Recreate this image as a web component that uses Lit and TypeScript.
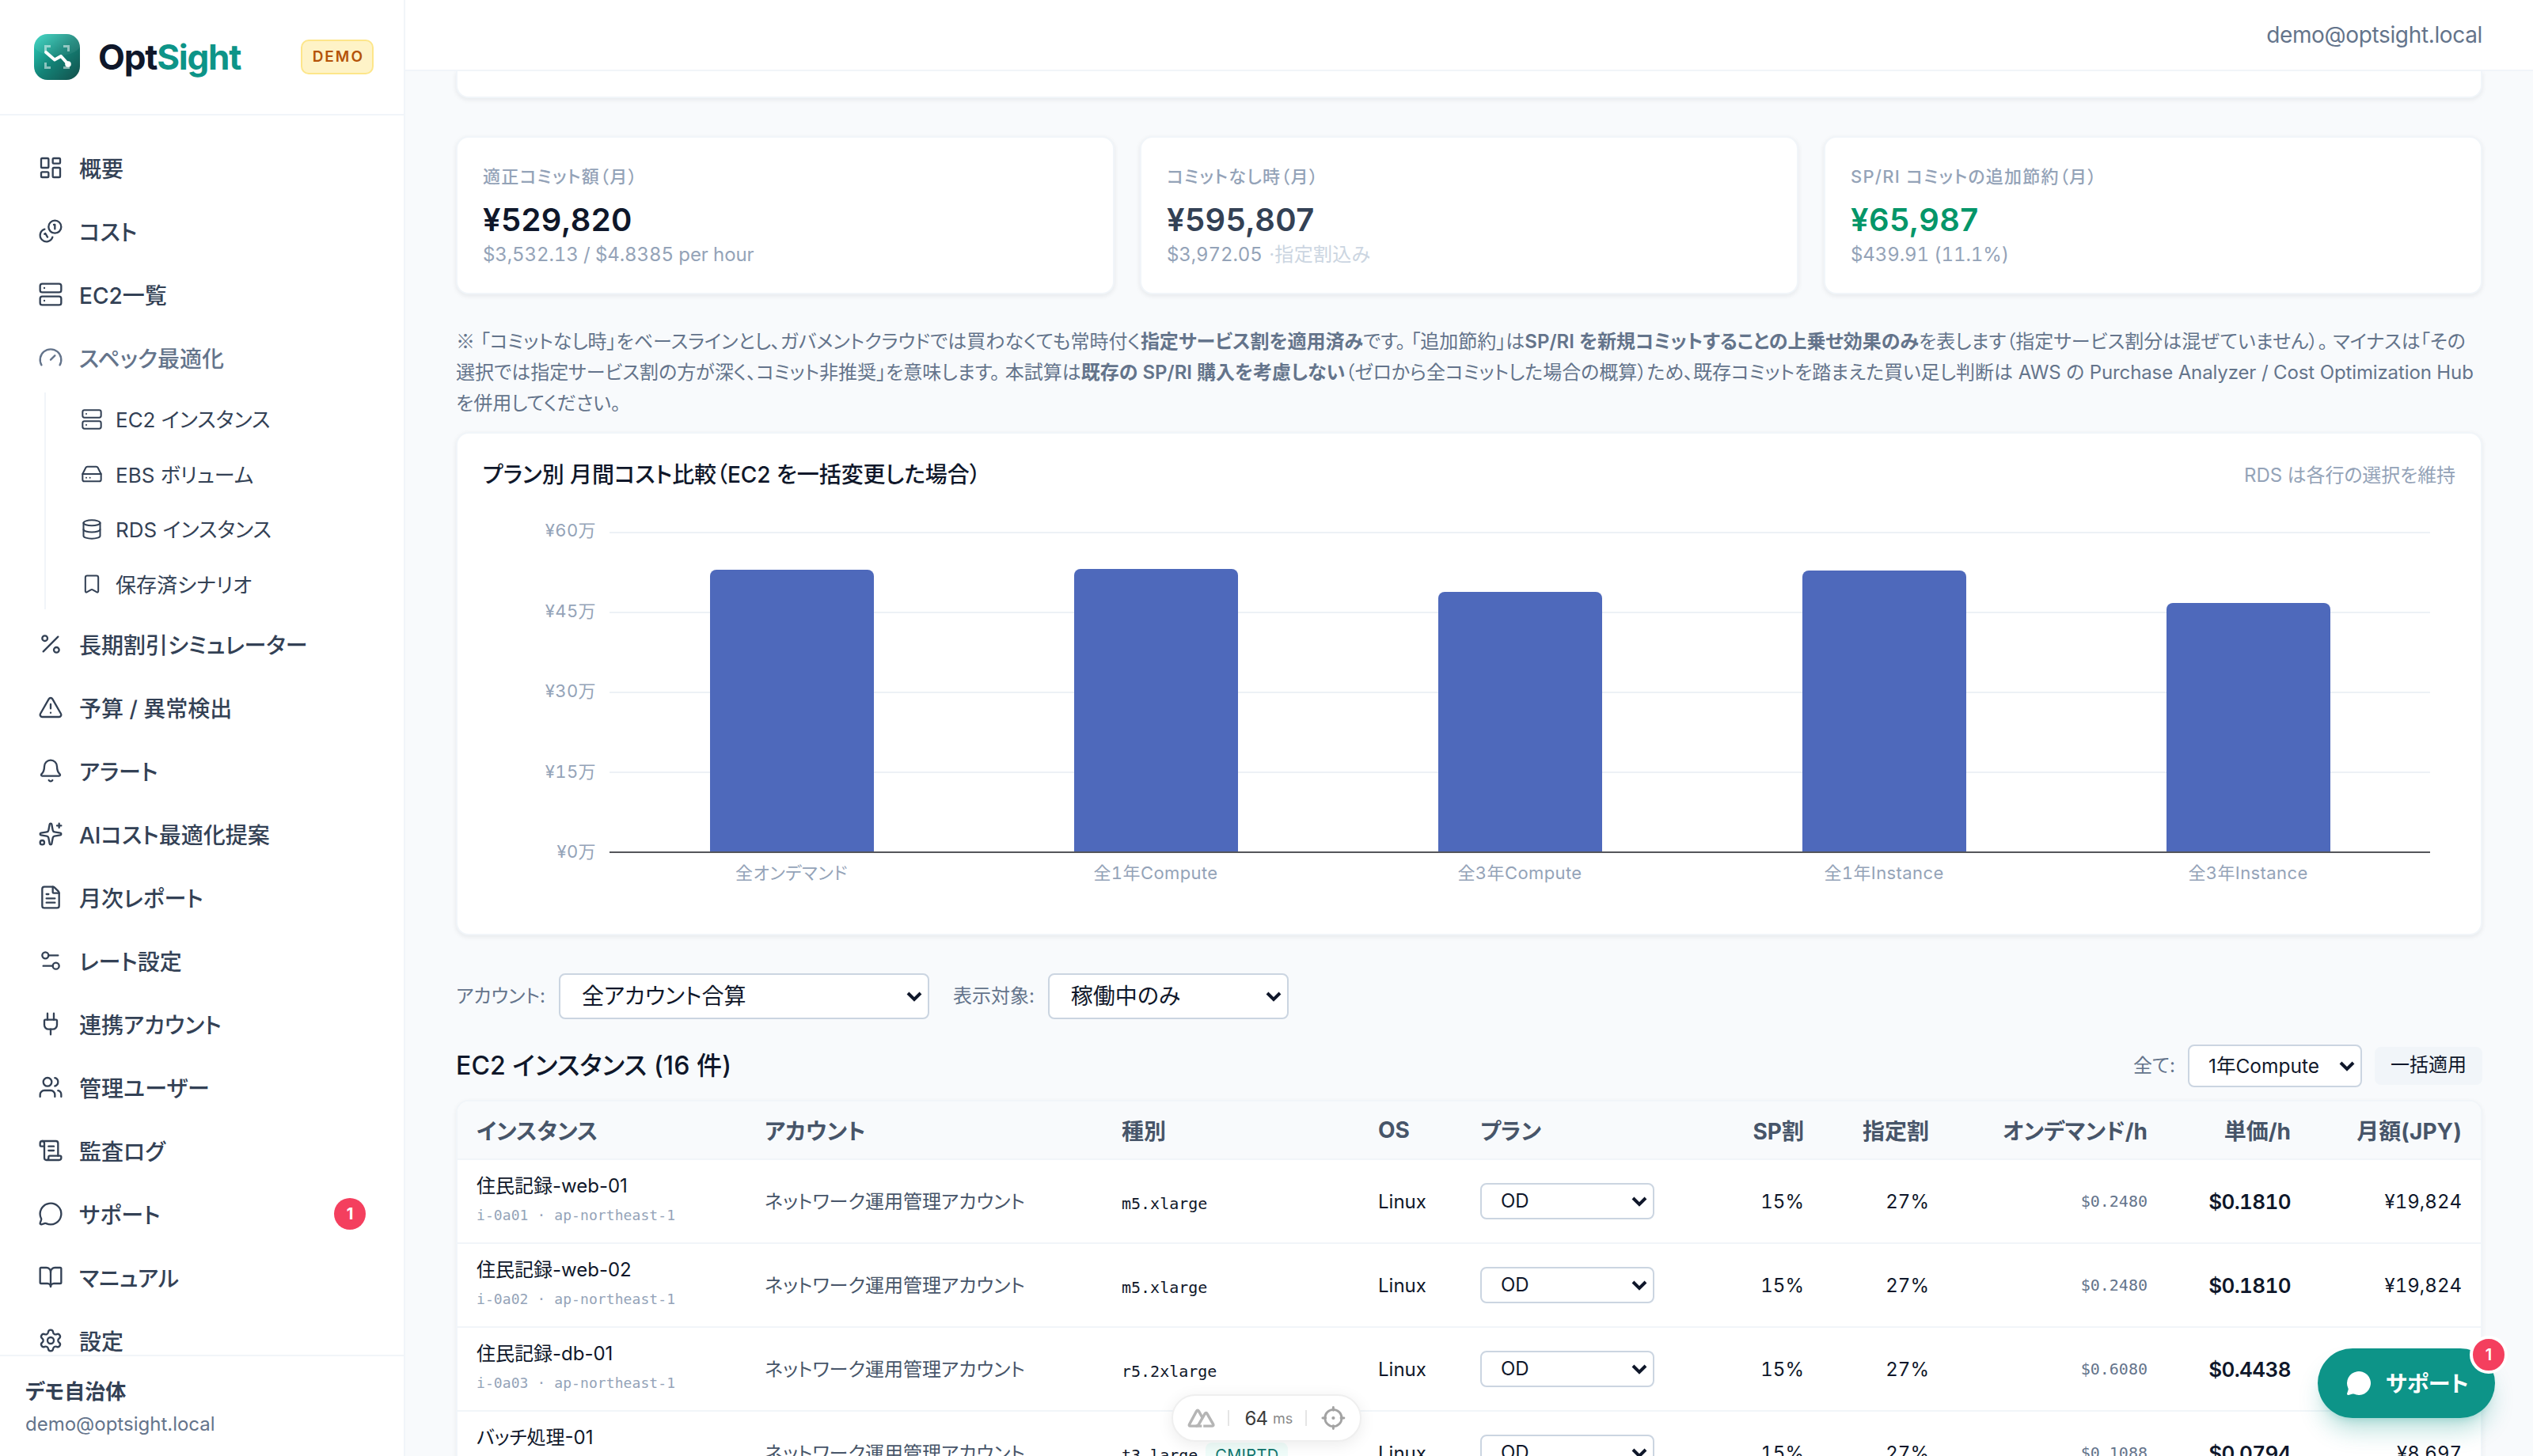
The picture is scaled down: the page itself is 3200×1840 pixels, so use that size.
import {LitElement, html, svg, css, nothing} from 'lit';
import type {SVGTemplateResult} from 'lit';
import {customElement, property} from 'lit/decorators.js';
import {classMap} from 'lit/directives/class-map.js';

interface NavItem {
  icon: string;
  label: string;
  badge?: number;
  children?: NavItem[];
}

interface InstanceRow {
  name: string;
  id: string;
  account: string;
  type: string;
  tag?: string;
  onDemand: string;
  unit: string;
  monthly: string;
}

const ICONS: Record<string, SVGTemplateResult> = {
  dashboard: svg`<rect width="7" height="9" x="3" y="3" rx="1"/><rect width="7" height="5" x="14" y="3" rx="1"/><rect width="7" height="9" x="14" y="12" rx="1"/><rect width="7" height="5" x="3" y="16" rx="1"/>`,
  coins: svg`<path d="M13.744 17.736a6 6 0 1 1-7.48-7.48"/><path d="M15 6h1v4"/><path d="m6.134 14.768.866-.5 2 3.464"/><circle cx="16" cy="8" r="6"/>`,
  server: svg`<rect width="20" height="8" x="2" y="2" rx="2"/><rect width="20" height="8" x="2" y="14" rx="2"/><path d="M6 6h.01M6 18h.01"/>`,
  gauge: svg`<path d="m12 14 4-4"/><path d="M3.34 19a10 10 0 1 1 17.32 0"/>`,
  drive: svg`<path d="M22 12H2"/><path d="M5.45 5.11 2 12v6a2 2 0 0 0 2 2h16a2 2 0 0 0 2-2v-6l-3.45-6.89A2 2 0 0 0 16.76 4H7.24a2 2 0 0 0-1.79 1.11z"/><path d="M6 16h.01M10 16h.01"/>`,
  database: svg`<ellipse cx="12" cy="5" rx="9" ry="3"/><path d="M3 5v14a9 3 0 0 0 18 0V5"/><path d="M3 12a9 3 0 0 0 18 0"/>`,
  bookmark: svg`<path d="M17 3a2 2 0 0 1 2 2v15a1 1 0 0 1-1.496.868l-4.512-2.578a2 2 0 0 0-1.984 0l-4.512 2.578A1 1 0 0 1 5 20V5a2 2 0 0 1 2-2z"/>`,
  percent: svg`<path d="M19 5 5 19"/><circle cx="6.5" cy="6.5" r="2.5"/><circle cx="17.5" cy="17.5" r="2.5"/>`,
  warning: svg`<path d="m21.73 18-8-14a2 2 0 0 0-3.48 0l-8 14A2 2 0 0 0 4 21h16a2 2 0 0 0 1.73-3"/><path d="M12 9v4M12 17h.01"/>`,
  bell: svg`<path d="M10.268 21a2 2 0 0 0 3.464 0"/><path d="M3.262 15.326A1 1 0 0 0 4 17h16a1 1 0 0 0 .74-1.673C19.41 13.956 18 12.499 18 8A6 6 0 0 0 6 8c0 4.499-1.411 5.956-2.738 7.326"/>`,
  sparkles: svg`<path d="M11.017 2.814a1 1 0 0 1 1.966 0l1.051 5.558a2 2 0 0 0 1.594 1.594l5.558 1.051a1 1 0 0 1 0 1.966l-5.558 1.051a2 2 0 0 0-1.594 1.594l-1.051 5.558a1 1 0 0 1-1.966 0l-1.051-5.558a2 2 0 0 0-1.594-1.594l-5.558-1.051a1 1 0 0 1 0-1.966l5.558-1.051a2 2 0 0 0 1.594-1.594z"/><path d="M20 2v4M22 4h-4"/><circle cx="4" cy="20" r="2"/>`,
  report: svg`<path d="M6 22a2 2 0 0 1-2-2V4a2 2 0 0 1 2-2h8a2.4 2.4 0 0 1 1.704.706l3.588 3.588A2.4 2.4 0 0 1 20 8v12a2 2 0 0 1-2 2z"/><path d="M14 2v5a1 1 0 0 0 1 1h5"/><path d="M10 9H8M16 13H8M16 17H8"/>`,
  sliders: svg`<path d="M14 17H5M19 7h-9"/><circle cx="17" cy="17" r="3"/><circle cx="7" cy="7" r="3"/>`,
  plug: svg`<path d="M12 22v-5M15 8V2M9 8V2"/><path d="M17 8a1 1 0 0 1 1 1v4a4 4 0 0 1-4 4h-4a4 4 0 0 1-4-4V9a1 1 0 0 1 1-1z"/>`,
  users: svg`<path d="M16 21v-2a4 4 0 0 0-4-4H6a4 4 0 0 0-4 4v2"/><path d="M16 3.128a4 4 0 0 1 0 7.744"/><path d="M22 21v-2a4 4 0 0 0-3-3.87"/><circle cx="9" cy="7" r="4"/>`,
  scroll: svg`<path d="M15 12h-5M15 8h-5"/><path d="M19 17V5a2 2 0 0 0-2-2H4"/><path d="M8 21h12a2 2 0 0 0 2-2v-1a1 1 0 0 0-1-1H11a1 1 0 0 0-1 1v1a2 2 0 1 1-4 0V5a2 2 0 1 0-4 0v2a1 1 0 0 0 1 1h3"/>`,
  chat: svg`<path d="M2.992 16.342a2 2 0 0 1 .094 1.167l-1.065 3.29a1 1 0 0 0 1.236 1.168l3.413-.998a2 2 0 0 1 1.099.092 10 10 0 1 0-4.777-4.719"/>`,
  book: svg`<path d="M12 7v14"/><path d="M3 18a1 1 0 0 1-1-1V4a1 1 0 0 1 1-1h5a4 4 0 0 1 4 4 4 4 0 0 1 4-4h5a1 1 0 0 1 1 1v13a1 1 0 0 1-1 1h-6a3 3 0 0 0-3 3 3 3 0 0 0-3-3z"/>`,
  settings: svg`<path d="M9.671 4.136a2.34 2.34 0 0 1 4.659 0 2.34 2.34 0 0 0 3.319 1.915 2.34 2.34 0 0 1 2.33 4.033 2.34 2.34 0 0 0 0 3.831 2.34 2.34 0 0 1-2.33 4.033 2.34 2.34 0 0 0-3.319 1.915 2.34 2.34 0 0 1-4.659 0 2.34 2.34 0 0 0-3.32-1.915 2.34 2.34 0 0 1-2.33-4.033 2.34 2.34 0 0 0 0-3.831A2.34 2.34 0 0 1 6.35 6.051a2.34 2.34 0 0 0 3.319-1.915"/><circle cx="12" cy="12" r="3"/>`,
};

const NAV: NavItem[] = [
  {icon: 'dashboard', label: '概要'},
  {icon: 'coins', label: 'コスト'},
  {icon: 'server', label: 'EC2一覧'},
  {
    icon: 'gauge',
    label: 'スペック最適化',
    children: [
      {icon: 'server', label: 'EC2 インスタンス'},
      {icon: 'drive', label: 'EBS ボリューム'},
      {icon: 'database', label: 'RDS インスタンス'},
      {icon: 'bookmark', label: '保存済シナリオ'},
    ],
  },
  {icon: 'percent', label: '長期割引シミュレーター'},
  {icon: 'warning', label: '予算 / 異常検出'},
  {icon: 'bell', label: 'アラート'},
  {icon: 'sparkles', label: 'AIコスト最適化提案'},
  {icon: 'report', label: '月次レポート'},
  {icon: 'sliders', label: 'レート設定'},
  {icon: 'plug', label: '連携アカウント'},
  {icon: 'users', label: '管理ユーザー'},
  {icon: 'scroll', label: '監査ログ'},
  {icon: 'chat', label: 'サポート', badge: 1},
  {icon: 'book', label: 'マニュアル'},
  {icon: 'settings', label: '設定'},
];

const PLANS = [
  {label: '全オンデマンド', value: 52.8},
  {label: '全1年Compute', value: 53.02},
  {label: '全3年Compute', value: 48.65},
  {label: '全1年Instance', value: 52.76},
  {label: '全3年Instance', value: 46.65},
];

const ACCOUNT = 'ネットワーク運用管理アカウント';

const ROWS: InstanceRow[] = [
  {name: '住民記録-web-01', id: 'i-0a01', account: ACCOUNT, type: 'm5.xlarge', onDemand: '$0.2480', unit: '$0.1810', monthly: '¥19,824'},
  {name: '住民記録-web-02', id: 'i-0a02', account: ACCOUNT, type: 'm5.xlarge', onDemand: '$0.2480', unit: '$0.1810', monthly: '¥19,824'},
  {name: '住民記録-db-01', id: 'i-0a03', account: ACCOUNT, type: 'r5.2xlarge', onDemand: '$0.6080', unit: '$0.4438', monthly: '¥48,600'},
  {name: 'バッチ処理-01', id: 'i-0a04', account: ACCOUNT, type: 't3.large', tag: 'CMIRTD', onDemand: '$0.1088', unit: '$0.0794', monthly: '¥8,697'},
];

@customElement('nav-icon')
export class NavIcon extends LitElement {
  static override styles = css`
    :host {
      display: block;
      flex: none;
      width: 32px;
      height: 32px;
    }

    svg {
      display: block;
      width: 100%;
      height: 100%;
      fill: none;
      stroke: currentColor;
      stroke-width: 1.75;
      stroke-linecap: round;
      stroke-linejoin: round;
    }
  `;

  @property() name = '';

  override render() {
    return html`<svg viewBox="0 0 24 24">${ICONS[this.name] ?? nothing}</svg>`;
  }
}

@customElement('select-box')
export class SelectBox extends LitElement {
  static override styles = css`
    :host {
      display: flex;
      align-items: center;
      justify-content: space-between;
      box-sizing: border-box;
      height: 58px;
      padding: 0 7px 0 27px;
      border: 2px solid #cbd5e1;
      border-radius: 8px;
      background: #fff;
      color: #0f172a;
      font-size: 28px;
      line-height: 1;
      white-space: nowrap;
    }

    svg {
      display: block;
      width: 20px;
      height: 14px;
      fill: none;
      stroke: currentColor;
      stroke-width: 4;
    }
  `;

  override render() {
    return html`
      <slot></slot>
      <svg viewBox="0 0 20 14"><path d="M2 3l8 8 8-8" /></svg>
    `;
  }
}

@customElement('side-nav')
export class SideNav extends LitElement {
  static override styles = css`
    :host {
      display: flex;
      flex-direction: column;
      box-sizing: border-box;
      width: 512px;
      height: 1840px;
      border-right: 2px solid #f1f5f9;
      background: #fff;
      color: #334155;
    }

    .brand {
      display: flex;
      align-items: center;
      flex: none;
      height: 144px;
      padding: 0 38px 0 43px;
      border-bottom: 2px solid #f1f5f9;
    }

    .logo {
      width: 58px;
      height: 58px;
      margin-right: 23px;
    }

    .wordmark {
      margin-top: -1px;
      font-size: 44px;
      font-weight: 700;
      letter-spacing: -1.2px;
      color: #0f172a;
    }

    .accent {
      color: #0d9488;
    }

    .demo {
      margin-left: auto;
      box-sizing: border-box;
      height: 44px;
      padding: 0 10px 0 13px;
      border: 2px solid #fde68a;
      border-radius: 10px;
      background: #fef3c7;
      color: #b45309;
      font-size: 19px;
      font-weight: 600;
      line-height: 40px;
      letter-spacing: 2px;
    }

    nav {
      flex: 1;
      min-height: 0;
      overflow: hidden;
      padding: 28px 16px 0;
    }

    .item {
      display: flex;
      align-items: center;
      gap: 20px;
      height: 76px;
      margin-bottom: 4px;
      padding: 0 32px;
      font-size: 28px;
      font-weight: 500;
      white-space: nowrap;
    }

    .muted {
      color: #64748b;
    }

    .count {
      width: 40px;
      height: 40px;
      margin-left: auto;
      border-radius: 20px;
      background: #f43f5e;
      color: #fff;
      font-size: 20px;
      font-weight: 700;
      line-height: 40px;
      text-align: center;
    }

    .group {
      display: flex;
      flex-direction: column;
      gap: 4px;
      margin: 6px 0 6px 40px;
      border-left: 2px solid #f1f5f9;
    }

    .sub {
      display: flex;
      align-items: center;
      gap: 16px;
      height: 65.5px;
      padding-left: 44px;
      font-size: 26px;
      white-space: nowrap;
    }

    .sub nav-icon {
      width: 28px;
      height: 28px;
      margin-top: 2px;
    }

    .account {
      flex: none;
      box-sizing: border-box;
      height: 128px;
      padding: 25px 32px 0;
      border-top: 2px solid #f1f5f9;
    }

    .org {
      font-size: 26px;
      font-weight: 600;
      line-height: 40px;
    }

    .mail {
      color: #64748b;
      font-size: 24px;
      line-height: 42px;
    }
  `;

  private renderItem(item: NavItem) {
    return html`
      <div class=${classMap({item: true, muted: !!item.children})}>
        <nav-icon name=${item.icon}></nav-icon>
        <span>${item.label}</span>
        ${item.badge ? html`<span class="count">${item.badge}</span>` : nothing}
      </div>
      ${item.children
        ? html`<div class="group">
            ${item.children.map(
              (child) => html`<div class="sub">
                <nav-icon name=${child.icon}></nav-icon>
                <span>${child.label}</span>
              </div>`
            )}
          </div>`
        : nothing}
    `;
  }

  override render() {
    return html`
      <div class="brand">
        <svg class="logo" viewBox="0 0 58 58">
          <defs>
            <linearGradient id="tile" x1="0" y1="0" x2="1" y2="1">
              <stop offset="0" stop-color="#2dd4bf" />
              <stop offset="0.5" stop-color="#138377" />
              <stop offset="1" stop-color="#134e4a" />
            </linearGradient>
            <linearGradient id="shine" x1="0" y1="0" x2="0" y2="1">
              <stop offset="0" stop-color="#fff" stop-opacity="0.14" />
              <stop offset="1" stop-color="#fff" stop-opacity="0.05" />
            </linearGradient>
            <clipPath id="clip"><rect width="58" height="58" rx="17" /></clipPath>
          </defs>
          <g clip-path="url(#clip)">
            <rect width="58" height="58" fill="url(#tile)" />
            <ellipse cx="29" cy="11" rx="31" ry="16.5" fill="url(#shine)" />
          </g>
          <path
            d="M14.5 22v-6.5H21M37 15.500H43.500V22M14.500 36v6.500H21M37 42.500H43.500V36"
            fill="none"
            stroke="#fff"
            stroke-opacity="0.5"
            stroke-width="3"
          />
          <path
            d="M15 23l11 9.500 8-4.500 8.500 9.500"
            fill="none"
            stroke="#fff"
            stroke-width="4"
            stroke-linecap="round"
            stroke-linejoin="round"
          />
          <circle cx="43" cy="38" r="3.800" fill="#fff" />
        </svg>
        <span class="wordmark">Opt<span class="accent">Sight</span></span>
        <span class="demo">DEMO</span>
      </div>
      <nav>${NAV.map((item) => this.renderItem(item))}</nav>
      <div class="account">
        <div class="org">デモ自治体</div>
        <div class="mail">demo@optsight.local</div>
      </div>
    `;
  }
}

@customElement('plan-chart')
export class PlanChart extends LitElement {
  static override styles = css`
    :host {
      display: block;
      color: #94a3b8;
      font-size: 22px;
      font-variant-numeric: tabular-nums;
      letter-spacing: 0.4px;
    }

    .plot {
      display: grid;
      grid-template-columns: 143px 2300px;
      column-gap: 17px;
    }

    .ticks {
      display: flex;
      flex-direction: column;
      justify-content: space-between;
      height: 446px;
      margin: -22px 0 -18px;
      text-align: right;
      line-height: 40px;
    }

    /* 101px repeat puts a grid line on every 15万 step */
    .area {
      display: flex;
      box-sizing: border-box;
      height: 406px;
      border-bottom: 2px solid #54555a;
      background: repeating-linear-gradient(#edf1f6 0 2px, transparent 2px 101px);
    }

    .slot {
      display: flex;
      align-items: flex-end;
      justify-content: center;
      flex: 1;
    }

    .bar {
      width: 45%;
      border-radius: 8px 8px 0 0;
      background: #4e69bb;
    }

    .labels {
      grid-column: 2;
      display: flex;
      text-align: center;
      line-height: 32px;
      padding-top: 9px;
    }

    .label {
      flex: 1;
    }
  `;

  override render() {
    return html`
      <div class="plot">
        <div class="ticks">
          ${[60, 45, 30, 15, 0].map((v) => html`<span>¥${v}万</span>`)}
        </div>
        <div class="area">
          ${PLANS.map(
            (p) => html`<div class="slot">
              <div class="bar" style="height: ${(p.value / 60) * 100}%"></div>
            </div>`
          )}
        </div>
        <div class="labels">
          ${PLANS.map((p) => html`<span class="label">${p.label}</span>`)}
        </div>
      </div>
    `;
  }
}

@customElement('instance-table')
export class InstanceTable extends LitElement {
  static override styles = css`
    :host {
      display: block;
      border: 2px solid #f1f5f9;
      border-radius: 16px 16px 0 0;
      background: #fff;
      overflow: hidden;
      box-shadow: 0 2px 6px rgba(15, 23, 42, 0.06);
      color: #0f172a;
      font-size: 24px;
      white-space: nowrap;
    }

    .row {
      display: grid;
      grid-template-columns: 364px 451px 324px 129px 340px 117px 158px 276px 181px 216px;
      align-items: center;
      box-sizing: border-box;
      height: 106px;
      border-bottom: 2px solid #f1f5f9;
    }

    .row > * {
      padding: 0 24px;
    }

    .head {
      height: 74px;
      padding-bottom: 1px;
      background: #f8fafc;
      color: #475569;
      font-size: 28px;
      font-weight: 700;
    }

    .num {
      text-align: right;
      font-variant-numeric: tabular-nums;
    }

    .row .instance {
      padding-bottom: 5px;
    }

    .name {
      line-height: 36px;
    }

    .id {
      margin-top: 5px;
      color: #94a3b8;
      font-family: 'DejaVu Sans Mono', monospace;
      font-size: 18px;
      line-height: 28px;
      letter-spacing: 0.08px;
    }

    .row .account {
      padding-bottom: 3px;
      color: #475569;
    }

    .type {
      display: flex;
      align-items: center;
      gap: 10px;
      padding-top: 5px;
      font-family: 'DejaVu Sans Mono', monospace;
      font-size: 20px;
    }

    .tag {
      padding: 0 12px;
      border-radius: 8px;
      background: #f0fdfa;
      color: #0f766e;
      font-family: Inter, sans-serif;
      line-height: 32px;
      letter-spacing: 0.3px;
    }

    .plan select-box {
      width: 220px;
      height: 46px;
      padding-left: 24px;
      font-size: 24px;
    }

    .on-demand {
      color: #64748b;
      font-family: 'DejaVu Sans Mono', monospace;
      font-size: 20px;
    }

    .unit {
      font-size: 26px;
      font-weight: 600;
      letter-spacing: -0.6px;
    }
  `;

  override render() {
    return html`
      <div class="row head">
        <span>インスタンス</span>
        <span>アカウント</span>
        <span>種別</span>
        <span>OS</span>
        <span>プラン</span>
        <span class="num">SP割</span>
        <span class="num">指定割</span>
        <span class="num">オンデマンド/h</span>
        <span class="num">単価/h</span>
        <span class="num">月額(JPY)</span>
      </div>
      ${ROWS.map(
        (row) => html`<div class="row">
          <div class="instance">
            <div class="name">${row.name}</div>
            <div class="id">${row.id} · ap-northeast-1</div>
          </div>
          <span class="account">${row.account}</span>
          <div class="type">
            ${row.type}
            ${row.tag ? html`<span class="tag">${row.tag}</span>` : nothing}
          </div>
          <span>Linux</span>
          <div class="plan"><select-box>OD</select-box></div>
          <span class="num">15%</span>
          <span class="num">27%</span>
          <span class="num on-demand">${row.onDemand}</span>
          <span class="num unit">${row.unit}</span>
          <span class="num">${row.monthly}</span>
        </div>`
      )}
    `;
  }
}

@customElement('app-root')
export class AppRoot extends LitElement {
  static override styles = css`
    :host {
      position: relative;
      display: flex;
      width: 3200px;
      height: 1840px;
      overflow: hidden;
      background: #f8fafc;
      color: #0f172a;
      font-family: Inter, 'Noto Sans CJK JP', sans-serif;
      font-feature-settings: 'palt';
    }

    side-nav {
      flex: none;
    }

    .page {
      flex: 1;
      min-width: 0;
      display: flex;
      flex-direction: column;
    }

    .topbar {
      display: flex;
      align-items: center;
      justify-content: flex-end;
      flex: none;
      box-sizing: border-box;
      height: 90px;
      padding: 0 64px;
      border-bottom: 2px solid #f1f5f9;
      background: #fff;
      color: #64748b;
      font-size: 28px;
      letter-spacing: -0.35px;
    }

    .content {
      flex: 1;
      min-height: 0;
      overflow: hidden;
      padding: 0 64px;
    }

    .card {
      box-sizing: border-box;
      border: 2px solid #f1f5f9;
      border-radius: 16px;
      background: #fff;
      box-shadow: 0 2px 6px rgba(15, 23, 42, 0.08);
    }

    .tail {
      height: 34px;
      border-top: 0;
      border-radius: 0 0 16px 16px;
    }

    .cards {
      display: grid;
      grid-template-columns: repeat(3, 1fr);
      gap: 32px;
      margin-top: 48px;
    }

    .stat {
      height: 200px;
      padding: 33px 32px;
    }

    .caption {
      color: #94a3b8;
      font-size: 22px;
      font-weight: 500;
      line-height: 32px;
      letter-spacing: 1.25px;
    }

    .value {
      margin-top: 11px;
      font-size: 40px;
      font-weight: 600;
      line-height: 56px;
      letter-spacing: 0.4px;
    }

    .value.slate {
      color: #334155;
    }

    .value.green {
      color: #059669;
    }

    .usd {
      color: #94a3b8;
      font-size: 24px;
      line-height: 32px;
      letter-spacing: -0.1px;
      font-variant-numeric: tabular-nums;
    }

    .faint {
      margin-left: 2px;
      color: #cbd5e1;
      letter-spacing: 0.3px;
    }

    .note {
      margin-top: 40px;
      color: #64748b;
      font-size: 24px;
      line-height: 39px;
      white-space: nowrap;
    }

    .note b {
      font-weight: 600;
    }

    .asterisk {
      font-family: 'Noto Sans CJK JP', sans-serif;
      line-height: 1;
    }

    .services {
      letter-spacing: -0.12px;
    }

    .chart {
      height: 636px;
      margin-top: 17px;
      padding: 0 32px;
    }

    .chart-head {
      display: flex;
      align-items: center;
      justify-content: space-between;
      height: 100px;
    }

    .chart-title {
      font-size: 28px;
      font-weight: 500;
      letter-spacing: -0.05px;
    }

    .hint {
      color: #94a3b8;
      font-size: 24px;
      letter-spacing: -0.1px;
    }

    plan-chart {
      margin-top: 24px;
    }

    .filters {
      display: flex;
      align-items: center;
      margin-top: 48px;
      color: #64748b;
      font-size: 24px;
    }

    .filters span {
      margin-bottom: 6px;
    }

    .filters select-box {
      margin: 0 30px 0 17px;
    }

    .account-select {
      width: 468px;
    }

    .state-select {
      width: 304px;
    }

    .table-head {
      display: flex;
      align-items: center;
      height: 54px;
      margin: 32px 0 16px;
    }

    .table-title {
      margin: 0 auto 7px 0;
      font-size: 32px;
      font-weight: 500;
      letter-spacing: 0.1px;
    }

    .all {
      margin-bottom: 5px;
      color: #64748b;
      font-size: 24px;
    }

    .bulk-select {
      width: 220px;
      height: 54px;
      margin: 0 16px;
      padding-left: 24px;
      font-size: 24.5px;
    }

    .apply {
      width: 136px;
      height: 48px;
      border-radius: 8px;
      background: #f1f5f9;
      font-size: 24px;
      line-height: 46px;
      text-align: center;
    }

    .devtools {
      position: absolute;
      left: 1480px;
      top: 1762px;
      display: flex;
      align-items: center;
      box-sizing: border-box;
      width: 240px;
      height: 60px;
      padding: 0 18px;
      border: 2px solid #efefef;
      border-radius: 30px;
      background: #fff;
      box-shadow: 0 4px 20px rgba(0, 0, 0, 0.08);
      color: #3c3c3c;
      font-size: 24px;
    }

    .devtools svg {
      display: block;
      fill: none;
      stroke: #b5b5b5;
      stroke-width: 3.6;
      stroke-linejoin: round;
    }

    .mark {
      width: 36px;
      height: 26px;
    }

    .target {
      width: 32px;
      height: 32px;
    }

    .divider {
      width: 2px;
      height: 20px;
      margin: 0 18px 0 16px;
      background: #e5e5e5;
    }

    .time {
      margin-left: 2px;
      letter-spacing: -1px;
    }

    .ms {
      margin-left: 7px;
      color: #888;
      font-size: 18px;
    }

    .support {
      position: absolute;
      left: 2928px;
      top: 1704px;
      display: flex;
      align-items: center;
      gap: 16px;
      box-sizing: border-box;
      width: 224px;
      height: 88px;
      padding: 0 0 2px 34px;
      border-radius: 44px;
      background: #0d9488;
      box-shadow: 0 20px 30px -6px rgba(13, 148, 136, 0.3),
        0 8px 12px -8px rgba(13, 148, 136, 0.3);
      color: #fff;
      font-size: 28px;
      font-weight: 600;
      white-space: nowrap;
    }

    .bubble {
      width: 36px;
      height: 36px;
      margin-top: 2px;
      fill: #fff;
    }

    .support-count {
      position: absolute;
      right: -16px;
      top: -16px;
      width: 40px;
      height: 40px;
      border: 4px solid #fff;
      border-radius: 24px;
      background: #f43f5e;
      font-size: 20px;
      line-height: 40px;
      text-align: center;
    }
  `;

  override render() {
    return html`
      <side-nav></side-nav>
      <div class="page">
        <div class="topbar">demo@optsight.local</div>
        <div class="content">
          <div class="card tail"></div>

          <div class="cards">
            <div class="card stat">
              <div class="caption">適正コミット額（月）</div>
              <div class="value">¥529,820</div>
              <div class="usd">$3,532.13 / $4.8385 per hour</div>
            </div>
            <div class="card stat">
              <div class="caption">コミットなし時（月）</div>
              <div class="value slate">¥595,807</div>
              <div class="usd">
                $3,972.05 <span class="faint">·指定割込み</span>
              </div>
            </div>
            <div class="card stat">
              <div class="caption">SP/RI コミットの追加節約（月）</div>
              <div class="value green">¥65,987</div>
              <div class="usd">$439.91 (11.1%)</div>
            </div>
          </div>

          <div class="note">
            <span class="asterisk">※</span> 「コミットなし時」をベースラインとし、ガバメントクラウドでは買わなくても常時付く<b
              >指定サービス割を適用済み</b
            >です。 「追加節約」は<b
              >SP/RI を新規コミットすることの上乗せ効果のみ</b
            >を表します（指定サービス割分は混ぜていません）。 マイナスは「その<br />
            選択では指定サービス割の方が深く、コミット非推奨」を意味します。 本試算は<b
              >既存の SP/RI 購入を考慮しない</b
            >（ゼロから全コミットした場合の概算）ため、既存コミットを踏まえた買い足し判断は
            <span class="services"
              >AWS の Purchase Analyzer / Cost Optimization Hub</span
            ><br />
            を併用してください。
          </div>

          <div class="card chart">
            <div class="chart-head">
              <span class="chart-title"
                >プラン別 月間コスト比較（EC2 を一括変更した場合）</span
              >
              <span class="hint">RDS は各行の選択を維持</span>
            </div>
            <plan-chart></plan-chart>
          </div>

          <div class="filters">
            <span>アカウント:</span>
            <select-box class="account-select">全アカウント合算</select-box>
            <span>表示対象:</span>
            <select-box class="state-select">稼働中のみ</select-box>
          </div>

          <div class="table-head">
            <span class="table-title">EC2 インスタンス (16 件)</span>
            <span class="all">全て:</span>
            <select-box class="bulk-select">1年Compute</select-box>
            <span class="apply">一括適用</span>
          </div>
          <instance-table></instance-table>
        </div>
      </div>

      <div class="devtools">
        <svg class="mark" viewBox="0 0 36 26">
          <path d="M19 23.500H4Q1.500 23.500 2.800 21L12 4Q13.500 1.500 15 4L20 13" />
          <path d="M21 23.500H32Q35 23.500 33.800 21L26 7.500Q24.500 5 23 7.500L15.500 20.500Q14 23.500 11 23.500" />
        </svg>
        <span class="divider"></span>
        <span class="time">64</span><span class="ms">ms</span>
        <span class="divider"></span>
        <svg class="target" viewBox="0 0 32 32">
          <circle cx="16" cy="16" r="11" stroke="#a3a3a3" stroke-width="3" />
          <circle cx="16" cy="16" r="2.200" fill="#a3a3a3" stroke="none" />
          <path
            d="M16 2v4M16 26v4M2 16h4M26 16h4"
            stroke="#a3a3a3"
            stroke-width="3"
            stroke-linecap="round"
          />
        </svg>
      </div>

      <div class="support">
        <svg class="bubble" viewBox="0 0 24 24">${ICONS.chat}</svg>
        <span>サポート</span>
        <span class="support-count">1</span>
      </div>
    `;
  }
}

declare global {
  interface HTMLElementTagNameMap {
    'app-root': AppRoot;
    'nav-icon': NavIcon;
    'select-box': SelectBox;
    'side-nav': SideNav;
    'plan-chart': PlanChart;
    'instance-table': InstanceTable;
  }
}
